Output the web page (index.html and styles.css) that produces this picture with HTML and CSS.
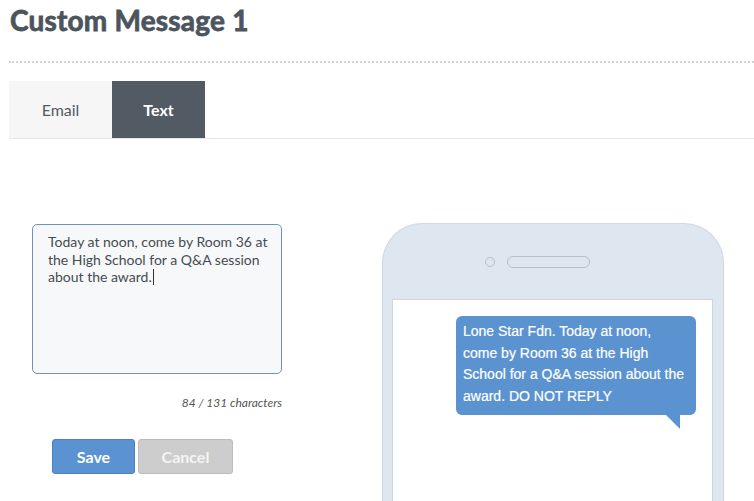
FILE: index.html
```html
<!DOCTYPE html>
<html lang="en">
<head>
<meta charset="utf-8">
<title>Custom Message 1</title>
<link rel="stylesheet" href="styles.css">
</head>
<body>
<div class="page">
  <h1 class="title">Custom Message 1</h1>
  <div class="rule"></div>
  <div class="tabs">
    <div class="tab">Email</div>
    <div class="tab active">Text</div>
  </div>
  <div class="content">
    <div class="editor">
      <div class="textarea">Today at noon, come by Room 36 at<br>the High School for a Q&amp;A session<br>about the award.<span class="caret"></span></div>
      <div class="count">84 / 131 characters</div>
      <div class="buttons">
        <button class="btn save">Save</button>
        <button class="btn cancel">Cancel</button>
      </div>
    </div>
    <div class="phone">
      <div class="phone-top">
        <span class="camera"></span>
        <span class="speaker"></span>
      </div>
      <div class="screen">
        <div class="bubble">Lone Star Fdn. Today at noon,<br>come by Room 36 at the High<br>School for a Q&amp;A session about the<br>award. DO NOT REPLY</div>
      </div>
    </div>
  </div>
</div>
</body>
</html>
```
FILE: styles.css
```css
html, body {
  margin: 0;
  padding: 0;
  background: #ffffff;
}
body {
  width: 754px;
  height: 501px;
  overflow: hidden;
  font-family: Lato, "Open Sans", sans-serif;
  color: #4f565f;
}
.page {
  padding-left: 9px;
}
.title {
  margin: 0;
  padding: 0 0 0 1px;
  font-size: 28px;
  line-height: 40px;
  font-weight: 700;
  color: #4c545d;
  -webkit-text-stroke: 0.8px #4c545d;
  letter-spacing: 0.2px;
}
.rule {
  margin-top: 21px;
  border-top: 2px dotted #d2d2d2;
  height: 0;
}
.tabs {
  margin-top: 18px;
  display: flex;
  height: 57px;
  border-bottom: 1px solid #e6e6e6;
}
.tab {
  display: flex;
  align-items: center;
  justify-content: center;
  width: 103px;
  background: #f6f6f6;
  font-size: 16px;
  color: #555b62;
}
.tab.active {
  width: 93px;
  background: #525a64;
  color: #ffffff;
  font-weight: 700;
}
.content {
  display: flex;
  margin-top: 84px;
}
.editor {
  width: 250px;
  padding-left: 23px;
}
.textarea {
  box-sizing: border-box;
  width: 250px;
  height: 150px;
  margin-top: 1px;
  border: 1px solid #6f96b8;
  border-radius: 5px;
  background: #f7f8f9;
  padding: 8px 6px 0 15px;
  font-size: 14px;
  line-height: 17.5px;
  color: #464c53;
  white-space: nowrap;
}
.caret {
  display: inline-block;
  width: 1px;
  height: 16px;
  background: #333;
  vertical-align: -3px;
  margin-left: 1px;
}
.count {
  margin-top: 21px;
  text-align: right;
  font-size: 12px;
  font-style: italic;
  line-height: 16px;
  color: #555;
}
.buttons {
  display: flex;
  gap: 3px;
  margin-top: 28px;
  padding-left: 20px;
}
.btn {
  height: 35px;
  border-radius: 3px;
  font-family: Lato, "Open Sans", sans-serif;
  font-size: 16px;
  font-weight: 700;
  padding: 0;
}
.save {
  width: 83px;
  background: #5b92d1;
  border: 1px solid #4b82c2;
  color: #ffffff;
}
.cancel {
  width: 95px;
  background: #cdcdcd;
  border: 1px solid #bcbcbc;
  color: #f4f4f4;
}
.phone {
  box-sizing: border-box;
  width: 342px;
  height: 278px;
  margin-left: 100px;
  background: #dee6ef;
  border: 1px solid #cfd8e3;
  border-bottom: none;
  border-radius: 40px 40px 0 0;
  padding: 0 10px 0 9px;
}
.phone-top {
  height: 75px;
  display: flex;
  align-items: center;
  padding-left: 93px;
  gap: 12px;
}
.camera {
  width: 10px;
  height: 10px;
  border-radius: 50%;
  border: 1px solid #b5bfca;
  box-sizing: border-box;
}
.speaker {
  width: 83px;
  height: 12px;
  border-radius: 6px;
  border: 1px solid #b5bfca;
  box-sizing: border-box;
}
.screen {
  height: 203px;
  background: #ffffff;
  border: 1px solid #ccd6e1;
  border-bottom: none;
  padding-top: 16px;
}
.bubble {
  position: relative;
  box-sizing: border-box;
  width: 240px;
  margin: 0 16px 0 auto;
  background: #5b92d0;
  border-radius: 6px;
  padding: 5px 6px 8px 7px;
  font-family: "Liberation Sans", Arial, sans-serif;
  font-size: 14px;
  line-height: 21.5px;
  color: #ffffff;
  white-space: nowrap;
  -webkit-text-stroke: 0.2px #ffffff;
}
.bubble::after {
  content: "";
  position: absolute;
  right: 16px;
  bottom: -14px;
  width: 0;
  height: 0;
  border-top: 14px solid #5b92d0;
  border-left: 14px solid transparent;
}
```
